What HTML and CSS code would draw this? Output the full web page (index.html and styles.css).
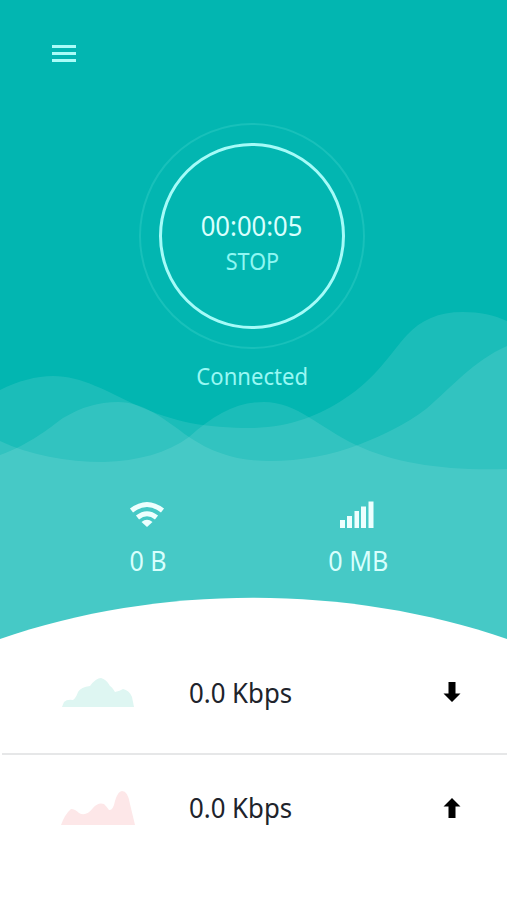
FILE: index.html
```html
<!DOCTYPE html>
<html lang="en">
<head>
    <meta charset="UTF-8">
    <meta name="viewport" content="width=device-width, initial-scale=1.0">
    <title>Connection</title>
    <link rel="stylesheet" href="styles.css">
</head>
<body>

<section class="hero">
    <!-- Waves and the white curve sit behind the content -->
    <svg class="waves" viewBox="0 0 507 640" preserveAspectRatio="none">
        <path class="wave" d="M0 390C18 381 36 376 53 376C82 376 108 392 136 405C174 422 204 428 253 428C291 427 320 415 344 399C377 378 391 352 407 335C421 320 438 312 463 312C480 312 494 315 507 321V640H0Z"/>
        <path class="wave" d="M0 455C30 444 48 429 63 418C82 407 98 402 118 402C144 402 164 419 189 437C213 453 237 461 270 461C301 461 332 455 358 445C383 435 405 425 426 409C453 386 473 361 507 346V640H0Z"/>
        <path class="wave" d="M0 441C30 455 66 462 104 462C138 461 167 453 189 437C214 415 236 402 264 402C297 402 320 428 356 445C396 464 449 471 507 469V640H0Z"/>
        <path class="curve" d="M0 639C159 584 347 584 507 639V640H0Z"/>
    </svg>

    <button class="menu-button" aria-label="Menu">
        <span></span>
        <span></span>
        <span></span>
    </button>

    <div class="ring">
        <button class="stop-button">
            <span class="timer">00:00:05</span>
            <span class="stop">STOP</span>
        </button>
    </div>
    <p class="status">Connected</p>

    <div class="usage">
        <div class="usage-item">
            <svg class="usage-icon" width="36" height="28" viewBox="0 0 36 28">
                <path class="arc" d="M2.500 10.500Q18 -1.500 33.500 10.500M8.500 17.500Q18 10 27.500 17.500"/>
                <path class="dot" d="M12.500 22Q18 17.500 23.500 22L18 27Z"/>
            </svg>
            <span class="usage-text">0 B</span>
        </div>
        <div class="usage-item">
            <svg class="usage-icon" width="36" height="28" viewBox="0 0 36 28">
                <path class="dot" d="M1 20h5v8h-5zM8 16h5v12h-5zM15.500 11h4.500v17h-4.500zM22 6.500h5v21.500h-5zM29.500 1.500h5v26.500h-5z"/>
            </svg>
            <span class="usage-text">0 MB</span>
        </div>
    </div>
</section>

<section class="speeds">
    <div class="speed-row">
        <svg class="chart download" width="74" height="38" viewBox="0 0 74 38">
            <path d="M1 34L3 29Q6 26 12 27Q15 25 17 19Q20 14 29 13Q35 5 40 5Q45 6 49 13Q51 14 54 19Q59 18 62 16Q68 17 71 24L73 34Z"/>
        </svg>
        <span class="speed">0.0 Kbps</span>
        <svg class="arrow" width="18" height="22" viewBox="0 0 18 22">
            <path d="M5.500 1h7v11.500h5l-8.500 8.500-8.500-8.500h5z"/>
        </svg>
    </div>
    <div class="speed-row">
        <svg class="chart upload" width="74" height="38" viewBox="0 0 74 38">
            <path d="M0 36Q4 25 10 20Q14 20 18 24Q25 28 32 19Q37 13 43 15Q45 17 48 21Q52 22 54 12Q57 2 61 2Q67 2 69 15L74 36Z"/>
        </svg>
        <span class="speed">0.0 Kbps</span>
        <svg class="arrow" width="18" height="22" viewBox="0 0 18 22">
            <path d="M5.500 21h7v-11.500h5l-8.500-8.500-8.500 8.500h5z"/>
        </svg>
    </div>
</section>

</body>
</html>
```
FILE: styles.css
```css
* {
    margin: 0;
    padding: 0;
    box-sizing: border-box;
}
body {
    font-family: "Noto Sans", "Open Sans", sans-serif;
    background-color: #fff;
    height: 900px;
    overflow: hidden;
}
button {
    background: none;
    border: none;
    font-family: inherit;
    cursor: pointer;
}
.hero {
    position: relative;
    isolation: isolate;
    height: 639px;
    background-color: #02b6b1;
    display: flex;
    flex-direction: column;
    align-items: center;
}
.waves {
    position: absolute;
    top: 0;
    left: 0;
    width: 100%;
    height: 640px;
    z-index: -1;
}
.wave {
    fill: #fff;
    fill-opacity: 0.1;
}
.curve {
    fill: #fff;
}
.menu-button {
    align-self: flex-start;
    margin: 45px 0 0 52px;
    width: 24px;
    height: 17px;
    display: flex;
    flex-direction: column;
    justify-content: space-between;
}
.menu-button span {
    height: 3px;
    background-color: #a9fcf8;
}
.ring {
    width: 226px;
    height: 226px;
    margin-top: 61px;
    margin-right: 3px;
    border: 2px solid #18c0ba;
    border-radius: 50%;
    display: flex;
    justify-content: center;
    align-items: center;
}
.stop-button {
    width: 186px;
    height: 186px;
    border: 3px solid #a5fbf8;
    border-radius: 50%;
    display: flex;
    flex-direction: column;
    align-items: center;
    padding-top: 62px;
}
.timer {
    font-size: 27px;
    line-height: 36px;
    color: #d9fffd;
    transform: scaleX(0.95);
}
.stop {
    font-size: 23px;
    line-height: 35px;
    color: #8ff7f3;
    transform: scaleX(0.94);
}
.status {
    font-size: 23px;
    line-height: 32px;
    margin-top: 11px;
    margin-right: 2px;
    color: #99f8f4;
    transform: scaleX(0.96);
}
.usage {
    display: grid;
    grid-template-columns: 210px 210px;
    margin-top: 108px;
}
.usage-item {
    display: flex;
    flex-direction: column;
    align-items: center;
}
.usage-icon {
    margin-right: 4px;
}
.usage-text {
    font-size: 27px;
    line-height: 36px;
    margin-top: 15px;
    color: #d9fffd;
    transform: scaleX(0.93);
}
.arc {
    fill: none;
    stroke: #edfffe;
    stroke-width: 5;
}
.dot {
    fill: #edfffe;
}
.speed-row {
    height: 114px;
    padding: 0 46px 8px 61px;
    display: flex;
    align-items: center;
}
.speed-row + .speed-row {
    height: 115px;
    margin-left: 2px;
    padding-left: 59px;
    border-top: 2px solid #e6e7e8;
}
.chart {
    margin-right: 54px;
}
.download {
    fill: #def6f2;
}
.upload {
    fill: #fde7e8;
}
.speed {
    font-size: 27px;
    color: #20232b;
    flex: 1;
    transform: scaleX(0.955);
    transform-origin: left;
}
```
